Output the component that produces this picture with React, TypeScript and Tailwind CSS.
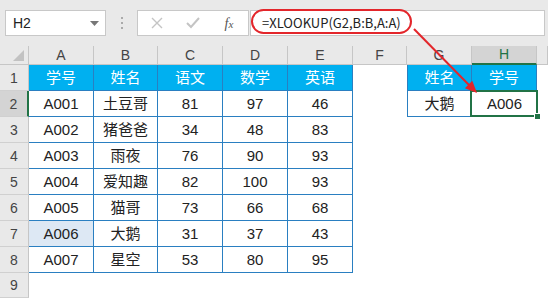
import React from 'react';

const COLS = ['A', 'B', 'C', 'D', 'E', 'F', 'G', 'H', 'I'];

const table = [
  ['学号', '姓名', '语文', '数学', '英语'],
  ['A001', '土豆哥', '81', '97', '46'],
  ['A002', '猪爸爸', '34', '48', '83'],
  ['A003', '雨夜', '76', '90', '93'],
  ['A004', '爱知趣', '82', '100', '93'],
  ['A005', '猫哥', '73', '66', '68'],
  ['A006', '大鹅', '31', '37', '43'],
  ['A007', '星空', '53', '80', '95'],
];

const font = 'font-["Liberation_Sans","Noto_Sans_CJK_SC",sans-serif]';

function Cell({ row, col }: { row: number; col: number }) {
  // main table A1:E8
  if (row <= 8 && col <= 4) {
    const header = row === 1;
    const found = row === 7 && col === 0;
    return (
      <div
        className={`flex items-center justify-center pt-[2px] border-r border-b border-[#2a7fc1] text-[15px] ${
          header ? 'bg-[#00b0f0] text-white' : found ? 'bg-[#dde8f4] text-[#222]' : 'bg-white text-[#222]'
        }`}
      >
        {table[row - 1][col]}
      </div>
    );
  }
  // lookup table G1:H2
  if (row === 1 && (col === 6 || col === 7)) {
    return (
      <div
        className={`flex items-center justify-center pt-[2px] bg-[#00b0f0] text-white text-[15px] border-r border-b border-[#2a7fc1] ${
          col === 6 ? 'border-l' : ''
        }`}
      >
        {col === 6 ? '姓名' : '学号'}
      </div>
    );
  }
  if (row === 2 && col === 6) {
    return (
      <div className="flex items-center justify-center pt-[2px] bg-white text-[#222] text-[15px] border-l border-r border-b border-[#2a7fc1]">
        大鹅
      </div>
    );
  }
  if (row === 2 && col === 7) {
    return (
      <div className="relative flex items-center justify-center pt-[2px] bg-white text-[#222] text-[15px] border-b border-[#2a7fc1]">
        A006
        <div className="absolute -left-[2px] -top-[1px] -right-[1px] -bottom-[1px] border-2 border-[#217346]" />
        <div className="absolute -right-[4px] -bottom-[4px] w-[7px] h-[7px] bg-[#217346] border border-white" />
      </div>
    );
  }
  return <div className="bg-white" />;
}

export default function App() {
  const rows = [1, 2, 3, 4, 5, 6, 7, 8, 9];

  return (
    <div className={`relative w-[548px] h-[298px] overflow-hidden bg-white ${font}`}>
      {/* Toolbar */}
      <div className="h-[46px] bg-[#e9e9e9] flex items-start pt-[10px]">
        <div className="ml-[5px] w-[101px] h-[26px] bg-white border border-[#c8c8c8] flex items-center justify-between pl-[7px] pr-[6px]">
          <span className="text-[14px] text-[#222]">H2</span>
          <svg width="9" height="5" viewBox="0 0 9 5">
            <polygon points="0,0 9,0 4.5,5" fill="#777" />
          </svg>
        </div>
        <div className="w-[31px] h-[26px] flex flex-col items-center justify-center gap-[3px]">
          <span className="w-[2px] h-[2px] bg-[#aaa]" />
          <span className="w-[2px] h-[2px] bg-[#aaa]" />
          <span className="w-[2px] h-[2px] bg-[#aaa]" />
        </div>
        <div className="w-[112px] h-[26px] bg-white border border-[#c8c8c8] flex items-center">
          <div className="w-[38px] flex justify-center">
            <svg width="12" height="12" viewBox="0 0 12 12">
              <path d="M1 1 L11 11 M11 1 L1 11" stroke="#c4c4c4" strokeWidth="1.4" />
            </svg>
          </div>
          <div className="w-[34px] flex justify-center">
            <svg width="14" height="12" viewBox="0 0 14 12">
              <path d="M1 6 L5 10 L13 1" stroke="#c4c4c4" strokeWidth="2" fill="none" />
            </svg>
          </div>
          <div className="w-[38px] flex justify-center">
            <span className='text-[14px] italic text-[#555] font-["Liberation_Serif",serif]'>
              f<span className="text-[11px]">x</span>
            </span>
          </div>
        </div>
        <div className="ml-[1px] w-[295px] h-[26px] bg-white border border-[#c8c8c8] flex items-center pl-[11px]">
          <span className='text-[13px] text-[#222] font-["Noto_Sans_CJK_SC",sans-serif]'>=XLOOKUP(G2,B:B,A:A)</span>
        </div>
      </div>

      {/* Sheet */}
      <div className="grid grid-cols-[29px_65px_64px_65px_65px_65px_54px_65px_65px_1fr] grid-rows-[19px_repeat(8,26px)_25px]">
        {/* column headers */}
        <div className="relative bg-[#e9e9e9] border-r border-b border-[#c6c6c6]">
          <svg className="absolute right-[4px] bottom-[3px]" width="11" height="11" viewBox="0 0 11 11">
            <polygon points="11,0 11,11 0,11" fill="#c2c2c2" />
          </svg>
        </div>
        {COLS.map((c) => (
          <div
            key={c}
            className={`flex items-center justify-center text-[14px] ${
              c === 'H'
                ? 'bg-[#d4d4d4] text-[#217346] border-r border-[#c6c6c6] border-b-2 border-b-[#217346]'
                : 'bg-[#e9e9e9] text-[#444] border-r border-b border-[#c6c6c6]'
            }`}
          >
            {c === 'I' ? '' : c}
          </div>
        ))}

        {rows.map((r) => (
          <React.Fragment key={r}>
            <div
              className={`flex items-end justify-center pb-[1px] text-[14px] text-[#444] border-b border-[#d0d0d0] ${
                r === 2
                  ? 'bg-[#d4d4d4] border-r-2 border-r-[#217346]'
                  : 'bg-[#e9e9e9] border-r border-r-[#c6c6c6]'
              }`}
            >
              {r}
            </div>
            {COLS.map((_, ci) => (
              <Cell key={ci} row={r} col={ci} />
            ))}
          </React.Fragment>
        ))}
      </div>

      {/* annotation: red ring around formula */}
      <div className="absolute left-[251px] top-[9px] w-[161px] h-[25px] rounded-full border-2 border-[#e3262b]" />

      {/* annotation: red arrow */}
      <svg className="absolute inset-0 pointer-events-none" width="548" height="298">
        <line x1="414" y1="29" x2="469" y2="85" stroke="#e3262b" strokeWidth="2" />
        <polygon points="477,93 472.3,80.8 464.9,88.2" fill="#e3262b" />
      </svg>
    </div>
  );
}
